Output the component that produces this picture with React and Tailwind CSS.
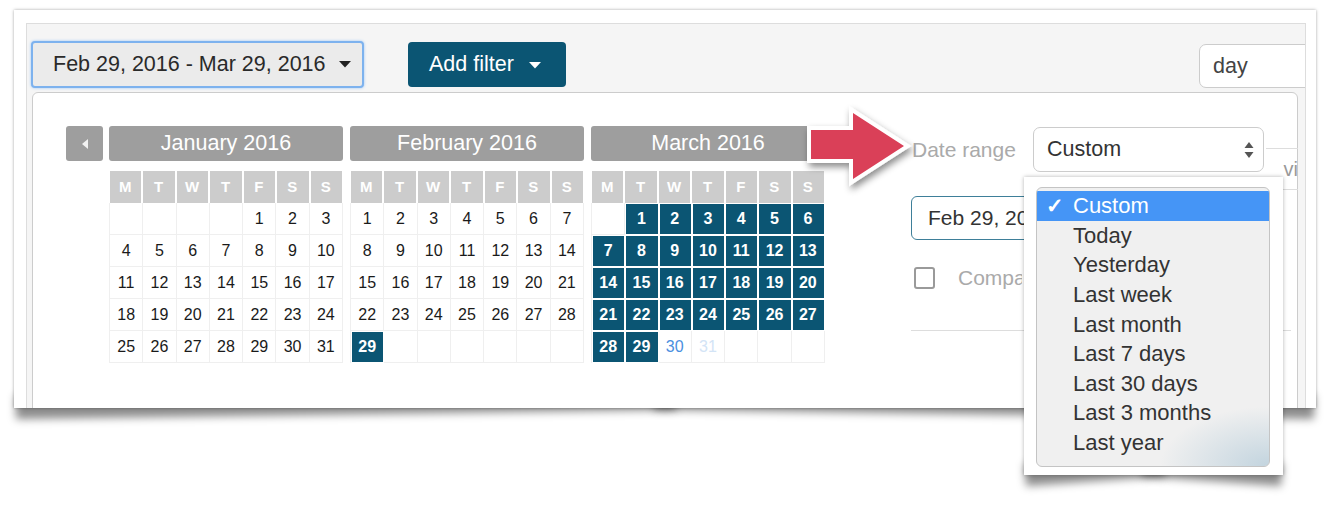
import React from "react";

const DOW = ["M", "T", "W", "T", "F", "S", "S"];

function Month({ title, offset, days, sel, blue, faint }) {
  const cells = [];
  for (let i = 0; i < 35; i++) {
    const d = i - offset + 1;
    cells.push(d >= 1 && d <= days ? d : null);
  }
  return (
    <div className="flex w-[234px] shrink-0 flex-col">
      <div className="flex h-[35px] items-center justify-center rounded-[3px] bg-[#9e9e9e] text-[21.5px] text-white">
        {title}
      </div>
      <div className="mt-[10px] grid w-[234px] grid-cols-7">
        {DOW.map((d, i) => (
          <div
            key={i}
            className="flex h-[32px] items-center justify-center border-r border-white bg-[#cccccc] text-[15px] font-semibold text-white shadow-[inset_1px_0_0_#fff]"
          >
            {d}
          </div>
        ))}
      </div>
      <div className="grid w-[234px] grid-cols-7 border-l border-[#efefef]">
        {cells.map((d, i) => {
          const isSel = d !== null && sel(d);
          let cls =
            "flex h-[32px] items-center justify-center border-r border-b text-[16px] ";
          if (isSel) {
            cls +=
              "border-white bg-[#0b5573] font-bold text-white shadow-[inset_1px_1px_0_#fff]";
          } else if (d !== null && blue === d) {
            cls += "border-[#efefef] text-[#4a8fe0]";
          } else if (d !== null && faint === d) {
            cls += "border-[#efefef] text-[#d3e4f6]";
          } else {
            cls += "border-[#efefef] text-[#1a1a1a]";
          }
          return (
            <div key={i} className={cls}>
              {d}
            </div>
          );
        })}
      </div>
    </div>
  );
}

const MENU = [
  "Custom",
  "Today",
  "Yesterday",
  "Last week",
  "Last month",
  "Last 7 days",
  "Last 30 days",
  "Last 3 months",
  "Last year",
];

export default function App() {
  return (
    <div className="relative h-[506px] w-[1334px] overflow-hidden bg-white font-['Liberation_Sans',Arial,sans-serif] text-[#333]">
      {/* main card */}
      <div className="relative ml-[14px] mt-[10px] h-[398px] w-[1302px]">
        <div className="absolute bottom-[-11px] left-[2px] h-[24px] w-[660px] origin-bottom-left -rotate-[0.8deg] bg-black/45 blur-[4px]" />
        <div className="absolute bottom-[-11px] right-[2px] h-[24px] w-[660px] origin-bottom-right rotate-[0.8deg] bg-black/45 blur-[4px]" />
        <div className="relative h-full overflow-hidden bg-white pl-[12px] pr-[10px] pt-[13px] shadow-[0_0_3px_rgba(0,0,0,0.35)]">
          <div className="h-full overflow-hidden border-l border-r border-t border-[#dddddd] bg-[#f5f5f5]">
            {/* toolbar */}
            <div className="flex h-[68px] items-start pl-[4px] pt-[17px]">
              <div className="flex h-[47px] w-[333px] shrink-0 items-center rounded-[4px] border-2 border-[#7db2ee] bg-[#ebebeb] pl-[20px] text-[21.5px] text-[#2a2a2a] shadow-[0_0_3px_#9cc6f5]">
                <span>Feb 29, 2016 - Mar 29, 2016</span>
                <svg className="ml-[13px]" width="12" height="7" viewBox="0 0 12 7">
                  <path d="M0 0 L12 0 L6 6.5 Z" fill="#222" />
                </svg>
              </div>
              <div className="ml-[44px] mt-[1px] flex h-[45px] w-[158px] shrink-0 items-center rounded-[4px] bg-[#0b5573] pl-[21px] text-[21.5px] text-white">
                <span>Add filter</span>
                <svg className="ml-[15px] mt-[2px]" width="12" height="7" viewBox="0 0 12 7">
                  <path d="M0 0 L12 0 L6 6.5 Z" fill="#fff" />
                </svg>
              </div>
              <div className="ml-[633px] mt-[3px] flex h-[44px] w-[130px] shrink-0 items-center rounded-[7px] border border-[#cccccc] bg-white pl-[13px] text-[21.5px] text-[#444]">
                day
              </div>
            </div>
            {/* popup */}
            <div className="ml-[5px] h-[330px] w-[1266px] rounded-t-[6px] border border-[#cccccc] bg-white pl-[33px] pt-[33px]">
              <div className="flex items-start">
                <div className="flex h-[35px] w-[37px] shrink-0 items-center justify-center rounded-[3px] bg-[#9e9e9e]">
                  <svg width="6" height="10" viewBox="0 0 6 10">
                    <path d="M6 0 L6 10 L0 5 Z" fill="#f2f2f2" />
                  </svg>
                </div>
                <div className="ml-[6px] flex gap-[7px]">
                  <Month title="January 2016" offset={4} days={31} sel={() => false} />
                  <Month title="February 2016" offset={0} days={29} sel={(d) => d === 29} />
                  <Month
                    title="March 2016"
                    offset={1}
                    days={31}
                    sel={(d) => d <= 29}
                    blue={30}
                    faint={31}
                  />
                </div>
                <div className="ml-[6px] h-[35px] w-[37px] shrink-0 rounded-[3px] bg-[#9e9e9e]" />
                {/* right panel */}
                <div className="ml-[43px] mt-[1px] flex flex-col">
                  <div className="flex h-[45px] items-start">
                    <div className="flex h-[45px] w-[122px] items-center pl-[1px] text-[21px] text-[#aaaaaa]">
                      Date range
                    </div>
                    <div className="flex h-[45px] w-[231px] shrink-0 items-center justify-between rounded-[7px] border border-[#cccccc] bg-white pl-[13px] pr-[9px] text-[21.5px] text-[#333]">
                      <span>Custom</span>
                      <svg width="10" height="20" viewBox="0 0 10 20">
                        <path d="M5 2 L9.5 8 L0.5 8 Z" fill="#555" />
                        <path d="M0.5 12 L9.5 12 L5 18 Z" fill="#555" />
                      </svg>
                    </div>
                    <div className="ml-[2px] mt-[21px] flex h-[42px] w-[32px] shrink-0 items-center justify-end overflow-hidden border-b border-t border-[#dddddd] text-[20px] text-[#999]">
                      vi
                    </div>
                  </div>
                  <div className="mt-[24px] flex h-[44px] w-[300px] items-center rounded-[6px] border-[1.5px] border-[#3e7f99] pl-[16px] text-[21px] text-[#333]">
                    <span className="w-[96px] overflow-hidden whitespace-nowrap">Feb 29, 2016 - Mar 29, 2016</span>
                  </div>
                  <div className="mt-[22px] flex h-[32px] items-center">
                    <div className="ml-[3px] h-[22px] w-[21px] shrink-0 rounded-[3px] border-2 border-[#9a9a9a]" />
                    <span className="ml-[23px] w-[64px] overflow-hidden whitespace-nowrap text-[21px] text-[#aaaaaa]">
                      Compare to previous period
                    </span>
                  </div>
                  <div className="mt-[36px] w-[380px] border-t border-[#dddddd]" />
                </div>
              </div>
            </div>
          </div>
        </div>
      </div>

      {/* red arrow */}
      <svg
        className="absolute left-[795px] top-[100px]"
        width="130"
        height="100"
        viewBox="0 0 130 100"
      >
        <defs>
          <filter id="arrowShadow" x="-20%" y="-20%" width="150%" height="160%">
            <feDropShadow dx="2" dy="4" stdDeviation="3.5" floodColor="#000" floodOpacity="0.45" />
          </filter>
        </defs>
        <g filter="url(#arrowShadow)">
          <polygon
            points="16,30 58,30 58,13 109,46 58,79 58,59 16,59"
            fill="#fff"
            stroke="#fff"
            strokeWidth="8"
            strokeLinejoin="miter"
          />
          <polygon points="16,30 58,30 58,13 109,46 58,79 58,59 16,59" fill="#da4058" />
        </g>
      </svg>

      {/* dropdown screenshot */}
      <div className="absolute left-[1024px] top-[177px] h-[298px] w-[259px]">
        <div className="absolute bottom-[-11px] left-[2px] h-[22px] w-[140px] origin-bottom-left -rotate-[4deg] bg-black/45 blur-[4px]" />
        <div className="absolute bottom-[-11px] right-[2px] h-[22px] w-[140px] origin-bottom-right rotate-[4deg] bg-black/45 blur-[4px]" />
        <div className="relative h-full bg-white pl-[12px] pt-[10px] shadow-[0_0_4px_rgba(0,0,0,0.3)]">
          <div className="relative h-[280px] w-[234px] overflow-hidden rounded-[6px] border border-[#c4c4c4] bg-[#f0f0f0] pt-[3px]">
            <div className="absolute bottom-0 right-0 h-[60px] w-[110px] bg-[radial-gradient(ellipse_at_bottom_right,rgba(110,160,190,0.35),transparent_70%)]" />
            {MENU.map((m, i) => (
              <div
                key={m}
                className={
                  "relative flex h-[29.6px] items-center text-[22px] " +
                  (i === 0 ? "bg-[#4595f6] text-white" : "text-[#333]")
                }
              >
                <span className="w-[36px] pl-[9px] text-[21px] font-bold">
                  {i === 0 ? "✓" : ""}
                </span>
                <span>{m}</span>
              </div>
            ))}
          </div>
        </div>
      </div>
    </div>
  );
}
